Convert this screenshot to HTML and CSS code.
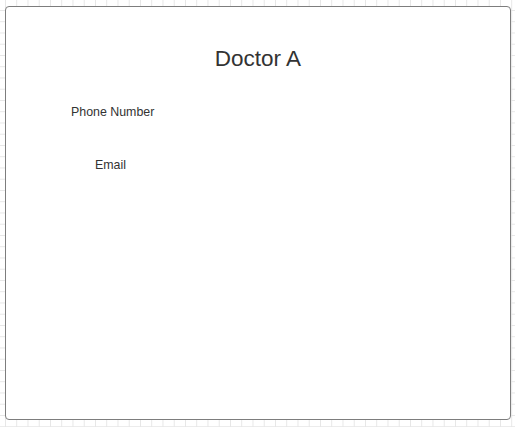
FILE: index.html
```html
<!DOCTYPE html>
<html lang="en">
<head>
  <meta charset="UTF-8">
  <meta name="viewport" content="width=device-width, initial-scale=1.0">
  <title>Doctor A</title>
  <link rel="stylesheet" href="styles.css">
</head>
<body>
  <main class="card">
    <h1 class="title">Doctor A</h1>
    <div class="field field-phone">Phone Number</div>
    <div class="field field-email">Email</div>
  </main>
</body>
</html>
```

FILE: styles.css
```css
html, body {
  margin: 0;
  padding: 0;
}

body {
  width: 515px;
  height: 427px;
  overflow: hidden;
  font-family: "Liberation Sans", Arial, sans-serif;
  color: #333;
  background-color: #fff;
  background-image:
    linear-gradient(to right, #e6e6e6 1px, transparent 1px),
    linear-gradient(to bottom, #e6e6e6 1px, transparent 1px);
  background-size: 11.25px 11.25px;
  background-position: 5px 10px;
}

.card {
  box-sizing: border-box;
  margin: 6px 0 0 5px;
  width: 506px;
  height: 414px;
  background: #fff;
  border: 1.5px solid #7d7d7d;
  border-radius: 4px;
  padding-top: 39px;
}

.title {
  margin: 0;
  font-size: 22.5px;
  font-weight: normal;
  text-align: center;
  line-height: 25px;
}

.field {
  font-size: 12.4px;
  line-height: 14px;
}

.field-phone {
  margin: 34px 0 0 65px;
}

.field-email {
  margin: 39px 0 0 89px;
}
```
